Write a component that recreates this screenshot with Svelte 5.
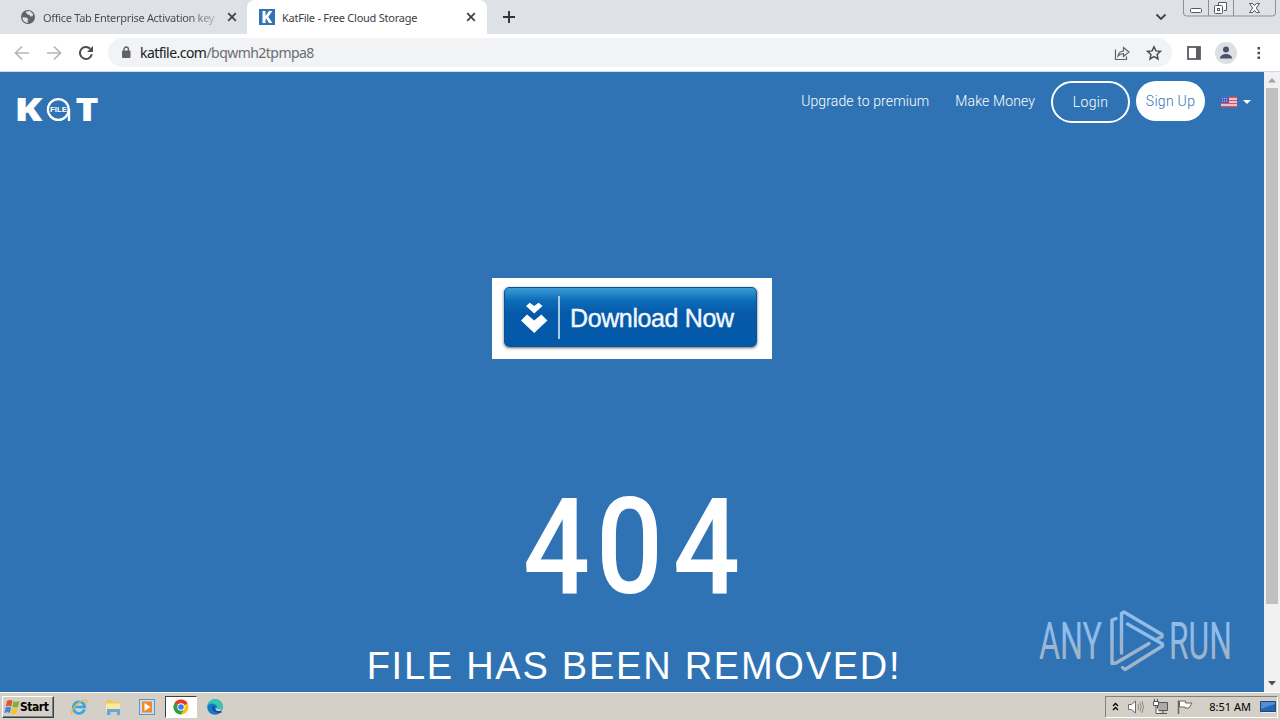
<script>
    let tabs = [
        { title: "Office Tab Enterprise Activation key", active: false },
        { title: "KatFile - Free Cloud Storage", active: true },
    ];
    let host = "katfile.com";
    let path = "/bqwmh2tpmpa8";
    let clock = "8:51 AM";
</script>

<div class="screen">
    <div class="tab-strip">
        {#each tabs as tab}
            <div class="tab" class:active={tab.active}>
                {#if tab.active}
                    <svg class="favicon" width="16" height="16" viewBox="0 0 16 16">
                        <rect width="16" height="16" fill="#3173b5" />
                        <path d="M3.500 2h3v5l3.500-5h3.300L9.300 7.700l4 6.300H10L7.200 9.600l-.7.900V14h-3z" fill="#fff" />
                    </svg>
                {:else}
                    <svg class="favicon" width="16" height="16" viewBox="0 0 16 16">
                        <circle cx="8" cy="8" r="7" fill="#5f6368" />
                        <path d="M2.3 8.2l4.1.3 2 1.7-.8 1.4.5 2.1C5 13.9 2.5 11.5 2.3 8.2zM6.3 2.4L9.8 2l3.4 3-.6 2.2-2.3.4-.5-1.5-2.2-.4-.3-1.2-1.7-.4z" fill="#dee1e6" />
                    </svg>
                {/if}
                <span class="title">{tab.title}</span>
                <svg class="close" width="10" height="10" viewBox="0 0 10 10">
                    <path d="M1.2 1.2l7.6 7.6M8.8 1.2L1.2 8.8" stroke="#3c4043" stroke-width="1.7" />
                </svg>
            </div>
        {/each}
        <svg class="new-tab" width="14" height="14" viewBox="0 0 14 14">
            <path d="M7 1v12M1 7h12" stroke="#303236" stroke-width="1.9" />
        </svg>
        <svg class="tab-search" width="12" height="8" viewBox="0 0 12 8">
            <path d="M1.5 1.5L6 6l4.500-4.500" fill="none" stroke="#3c4043" stroke-width="1.8" />
        </svg>
        <svg class="window-buttons" width="93" height="18" viewBox="0 0 93 18">
            <path d="M.5 0v13a3 3 0 0 0 3 3h86a3 3 0 0 0 3-3V0M25.500 0v16M50.500 0v16" fill="none" stroke="#8b8f97" />
            <rect x="7.500" y="8.500" width="11" height="4" rx="1" fill="#fff" stroke="#55585e" />
            <path d="M35.500 5V2.500h8v8H41" fill="#fff" stroke="#55585e" />
            <rect x="31.500" y="5.500" width="8" height="8" rx="1" fill="#fff" stroke="#55585e" />
            <rect x="34.500" y="8.500" width="2" height="2" fill="none" stroke="#55585e" />
            <path d="M66.500 3.500h3.200l1.800 2.200 1.800-2.200h3.200L73.300 8l3.200 4.500h-3.200l-1.800-2.200-1.800 2.200h-3.200L69.700 8z" fill="#fff" stroke="#55585e" />
        </svg>
    </div>

    <div class="toolbar">
        <svg class="nav" width="16" height="16" viewBox="0 0 16 16">
            <path d="M15 8H2M8 1.500L1.500 8 8 14.500" fill="none" stroke="#b4b6b9" stroke-width="1.700" />
        </svg>
        <svg class="nav" width="16" height="16" viewBox="0 0 16 16">
            <path d="M1 8h13M8 1.500L14.500 8 8 14.500" fill="none" stroke="#b4b6b9" stroke-width="1.700" />
        </svg>
        <svg class="nav" width="16" height="16" viewBox="0 0 16 16">
            <path d="M13.800 9.200A6 6 0 1 1 12.300 3.800" fill="none" stroke="#4a4d51" stroke-width="2" />
            <path d="M15 1v6H9z" fill="#4a4d51" />
        </svg>
        <div class="address">
            <svg width="10" height="13" viewBox="0 0 10 13">
                <rect x="1" y="4.500" width="8.500" height="7.500" rx="1" fill="#5f6368" />
                <path d="M3 5V3.200a2.200 2.200 0 0 1 4.400 0V5" fill="none" stroke="#5f6368" stroke-width="1.400" />
            </svg>
            <span class="url">{host}<span>{path}</span></span>
            <svg class="share" width="16" height="16" viewBox="0 0 16 16">
                <path d="M1.500 4.500v10h11v-3M4 11c.5-3 2.500-4.800 5.500-5V2.500L15 7l-5.500 4.500V8.700C7 8.700 5.500 9.300 4 11z" fill="none" stroke="#5f6368" stroke-width="1.200" />
            </svg>
            <svg width="16" height="16" viewBox="0 0 16 16">
                <path d="M8 1.700l1.900 4.200 4.600.5-3.400 3.100.9 4.500L8 11.700 4 14l.9-4.500-3.400-3.100 4.600-.5z" fill="none" stroke="#4d5156" stroke-width="1.500" />
            </svg>
        </div>
        <svg class="side-panel" width="14" height="14" viewBox="0 0 14 14">
            <rect x="1" y="1" width="12" height="12" fill="none" stroke="#5a5d61" stroke-width="1.800" />
            <path d="M9 1h4v12H9z" fill="#5a5d61" />
        </svg>
        <svg class="profile" width="22" height="22" viewBox="0 0 22 22">
            <circle cx="11" cy="11" r="11" fill="#dcdfe4" />
            <circle cx="11" cy="7.600" r="3" fill="#49546a" />
            <path d="M5 16.500c0-3 3-4.500 6-4.500s6 1.500 6 4.500z" fill="#49546a" />
        </svg>
        <svg class="menu" width="4" height="14" viewBox="0 0 4 14">
            <path d="M.5 1h2.500v2.500H.5zM.5 5.800h2.500v2.500H.5zM.5 10.600h2.500v2.500H.5z" fill="#4a4d51" />
        </svg>
    </div>

    <div class="viewport">
        <main>
            <header>
                <svg class="logo" width="84" height="40" viewBox="0 0 84 40">
                    <text x="-1.500" y="31" class="logo-letter" textLength="28" lengthAdjust="spacingAndGlyphs">K</text>
                    <circle cx="42.300" cy="19.500" r="10.400" fill="none" stroke="#fff" stroke-width="2.200" />
                    <path d="M53 19v12" stroke="#fff" stroke-width="2.400" />
                    <text x="34" y="22.200" class="logo-file" textLength="17" lengthAdjust="spacingAndGlyphs">FILE</text>
                    <text x="59.500" y="31" class="logo-letter" textLength="23" lengthAdjust="spacingAndGlyphs">T</text>
                </svg>
                <nav>
                    <a class="premium" href="#premium">Upgrade to premium</a>
                    <a class="money" href="#money">Make Money</a>
                    <a class="login" href="#login">Login</a>
                    <a class="signup" href="#signup">Sign Up</a>
                    <svg width="30" height="12" viewBox="0 0 30 12">
                        <path d="M0 2h16v10H0z" fill="#f3e3e6" />
                        <path d="M0 2.500h16M0 5.500h16M0 8.500h16M0 11.500h16" stroke="#e0505a" stroke-width="1.300" />
                        <path d="M0 2h8v6H0z" fill="#3c64c8" />
                        <path d="M1 3.500h6M1 6h6" stroke="#b9cdf5" stroke-dasharray="1 1" />
                        <path d="M22 5h8l-4 4z" fill="#fff" />
                    </svg>
                </nav>
            </header>

            <div class="banner">
                <button class="download">
                    <svg width="28" height="32" viewBox="0 0 28 32">
                        <path d="M5 5L8.800 1.800l4.400 3.300L17.600 1.800 21.500 5 13.200 12.500z" fill="#fff" />
                        <path d="M0 19.500l6-6 7.200 6 7.200-6 6 6L13.200 32z" fill="#fff" />
                    </svg>
                    <span class="divider"></span>
                    <span class="download-text">Download Now</span>
                </button>
            </div>

            <svg class="code" width="230" height="160" viewBox="0 0 230 160">
                <text x="6" y="128" textLength="67" lengthAdjust="spacingAndGlyphs">4</text>
                <text x="79" y="128" textLength="67" lengthAdjust="spacingAndGlyphs">0</text>
                <text x="156" y="128" textLength="67" lengthAdjust="spacingAndGlyphs">4</text>
            </svg>
            <h1>FILE HAS BEEN REMOVED!</h1>
        </main>

        <div class="scrollbar">
            <svg width="16" height="16" viewBox="0 0 16 16"><path d="M4 10.500h8l-4-4.500z" fill="#a3a3a3" /></svg>
            <div class="thumb"></div>
            <svg width="16" height="16" viewBox="0 0 16 16"><path d="M4 5h8l-4 4.500z" fill="#505050" /></svg>
        </div>

        <svg class="watermark" width="200" height="64" viewBox="0 0 200 64">
            <defs>
                <linearGradient id="glass" x1="0" y1="0" x2="0" y2="1">
                    <stop offset="0.45" stop-color="#92bce8" />
                    <stop offset="0.65" stop-color="#9db4cb" />
                </linearGradient>
            </defs>
            <text x="1" y="49" textLength="63" lengthAdjust="spacingAndGlyphs">ANY</text>
            <g fill="none" stroke="url(#glass)" stroke-width="3.400" stroke-linejoin="round" stroke-linecap="round">
                <path d="M78 8.500L74 10v43.500L78 53l33-19.500" />
                <path d="M83.500 43V3.500L86 2l38 22.500v2.500l-4 1.500" />
                <path d="M89.500 14l35 20v2L87 59.500l-2.500-2" />
            </g>
            <text x="131" y="49" textLength="63" lengthAdjust="spacingAndGlyphs">RUN</text>
        </svg>
    </div>

    <div class="taskbar">
        <button class="start">
            <svg width="17" height="16" viewBox="0 0 17 16">
                <path d="M3 2c2-1.500 4-1.200 5.500-.2L7.300 7.500C5.500 6.500 3.500 6.500 1.700 7.500z" fill="#e8502c" />
                <path d="M9.500 2.200c2 .9 4 .8 6-.2L14 8c-2 .8-4 .7-5.700-.2z" fill="#76b53b" />
                <path d="M1.500 8.600c2-1.100 3.800-1 5.600-.1L5.900 14c-2-1-3.800-.8-5.600.2z" fill="#3f8bd8" />
                <path d="M8.100 8.800c1.900.9 3.700.9 5.700.1l-1.300 5.700c-2 .8-3.800.7-5.600-.2z" fill="#f7c22c" />
            </svg>
            <span>Start</span>
        </button>
        <div class="task">
            <svg width="18" height="18" viewBox="0 0 18 18">
                <path d="M14.500 11.500A5.800 5.800 0 1 1 14.800 9H5" fill="none" stroke="#39a5e4" stroke-width="2.600" />
                <path d="M2 16.500C-.5 12 10 2 15.500 1.800c2 0 1.400 2.200.5 3.500" fill="none" stroke="#e7bd3c" stroke-width="1.300" />
            </svg>
        </div>
        <div class="task">
            <svg width="18" height="18" viewBox="0 0 18 18">
                <path d="M2 2h5l1 1.500h7V14H2z" fill="#edc95c" />
                <path d="M2 5.500h14V14H2z" fill="#fbe9a0" />
                <path d="M3 17v-6h13v6h-3v-3H6.500v3z" fill="#65a9d6" />
            </svg>
        </div>
        <div class="task">
            <svg width="18" height="18" viewBox="0 0 18 18">
                <rect x="1.500" y="1.500" width="15" height="15" fill="#c7def3" stroke="#5c96ca" />
                <rect x="4" y="3.500" width="10" height="11" fill="#f08a24" />
                <path d="M6.500 5v8l6-4z" fill="#fff" />
            </svg>
        </div>
        <div class="task pressed">
            <svg width="18" height="18" viewBox="0 0 18 18">
                <circle cx="9" cy="9" r="7.500" fill="#fbc116" />
                <path d="M9 9L2.500 5.200a7.500 7.500 0 0 1 13 0z" fill="#e33b2e" />
                <path d="M9 9L2.500 5.200A7.500 7.500 0 0 0 9 16.500l3-5.500z" fill="#2da04d" />
                <circle cx="9" cy="9" r="3.700" fill="#fff" />
                <circle cx="9" cy="9" r="2.800" fill="#3d7be8" />
            </svg>
        </div>
        <div class="task">
            <svg width="18" height="18" viewBox="0 0 18 18">
                <circle cx="9" cy="9" r="7.800" fill="#1676c8" />
                <path d="M1.500 8C2.500 3 6 1.200 9 1.200c5 0 7.800 3.500 7.800 7 0 2.800-2.300 4-4.500 4-1.300 0-2.300-.7-1.500-1.800C11.800 8 9 5.500 6 5.500S2.500 6.500 1.500 8z" fill="#39c6b0" />
                <path d="M7.500 8c-1.200 4 2 6.500 7.800 5.800" fill="none" stroke="#114d92" stroke-width="2" />
                <path d="M10.500 10.300c-.8 1.700 1.500 2.600 5 1.400" fill="none" stroke="#d4d0c8" stroke-width="1.500" />
            </svg>
        </div>
        <div class="tray">
            <svg width="7" height="11" viewBox="0 0 7 11">
                <path d="M1 4L3.500 1.500 6 4M1 8l2.500-2.500L6 8" fill="none" stroke="#000" stroke-width="1.300" />
            </svg>
            <svg class="volume" width="18" height="16" viewBox="0 0 18 16">
                <path d="M1.500 5.500h3L8.500 2v12L4.500 10.500h-3z" fill="#fff" stroke="#6c6c6c" />
                <path d="M11 5q1.500 3 0 6M13 3.500q2.500 4.500 0 9M15 2q3 6 0 12" fill="none" stroke="#8b8b8b" />
            </svg>
            <svg width="18" height="16" viewBox="0 0 18 16">
                <path d="M5.500 3.500h10v8h-10zM8 14.500h7M11 12v2" fill="#aaa" stroke="#555" />
                <path d="M1.500 2.500h5v4h-5zM2.500 0v2M5.500 0v2M4 7v7.500h4" fill="#fff" stroke="#555" />
            </svg>
            <svg width="18" height="16" viewBox="0 0 18 16">
                <path d="M2.500 15V1.500" stroke="#666" stroke-width="1.500" />
                <path d="M3.500 2h6v2h6.500l-3 5H9V8H3.500z" fill="#fff" stroke="#666" />
            </svg>
            <span class="clock">{clock}</span>
            <svg width="16" height="14" viewBox="0 0 16 14">
                <path d="M.5 1.500h15v10H.5z" fill="#2565b8" stroke="#24456f" />
                <path d="M1 2h14v2L1 9z" fill="#4f8fd8" />
                <path d="M2 12.500h13" stroke="#e9eef5" />
            </svg>
        </div>
    </div>
</div>

<style>
    :global(body) {
        margin: 0;
        overflow: hidden;
    }

    .screen {
        display: flex;
        flex-direction: column;
        width: 1280px;
        height: 720px;
        overflow: hidden;
        font-family: "Noto Sans", "Liberation Sans", sans-serif;
    }

    svg {
        display: block;
        flex: none;
        overflow: visible;
    }

    /* browser tabs */
    .tab-strip {
        display: flex;
        align-items: center;
        height: 34px;
        flex: none;
        background: #dee1e6;
    }

    .tab {
        display: flex;
        align-items: center;
        box-sizing: border-box;
        width: 247px;
        height: 34px;
        padding: 0 10px 0 20px;
        font-size: 11px;
        color: #45484c;
    }

    .tab.active {
        width: 240px;
        padding: 0 11px 0 12px;
        background: #fff;
        border-radius: 8px 8px 0 0;
        color: #3c4043;
    }

    .title {
        flex: 1;
        margin-left: 7px;
        white-space: nowrap;
        letter-spacing: -0.25px;
    }

    .tab:not(.active) .title {
        letter-spacing: -0.3px;
        background: linear-gradient(90deg, #45484c 145px, #b5b8bd 172px);
        background-clip: text;
        color: transparent;
    }

    .new-tab {
        margin-left: 15px;
    }

    .tab-search {
        margin-left: auto;
    }

    .window-buttons {
        align-self: flex-start;
        margin: 0 4px 0 16px;
    }

    .toolbar {
        display: flex;
        align-items: center;
        height: 37px;
        flex: none;
        background: #fff;
        border-bottom: 1px solid #c9def3;
    }

    .nav {
        margin-left: 14px;
    }

    .nav + .nav {
        margin-left: 16px;
    }

    .address {
        display: flex;
        align-items: center;
        box-sizing: border-box;
        width: 1064px;
        height: 29px;
        margin-left: 14px;
        padding: 0 10px 0 13px;
        border-radius: 15px;
        background: #f1f3f4;
    }

    .url {
        margin-left: 9px;
        font-size: 14px;
        color: #202124;
        letter-spacing: -0.54px;
    }

    .url span {
        color: #6a6e73;
    }

    .share {
        margin-left: auto;
        margin-right: 16px;
    }

    .side-panel {
        margin-left: 15px;
    }

    .profile {
        margin-left: 14px;
    }

    .menu {
        margin-left: 20px;
    }

    /* page */
    .viewport {
        display: flex;
        position: relative;
        height: 620px;
        flex: none;
    }

    main {
        display: flex;
        flex-direction: column;
        align-items: center;
        width: 1264px;
        background: #3073b5;
        color: #fff;
    }

    header {
        display: flex;
        justify-content: space-between;
        align-self: stretch;
        height: 206px;
        flex: none;
    }

    .logo {
        margin: 18px 0 0 16px;
    }

    .logo-letter {
        font: bold 32px "Open Sans", sans-serif;
        font-weight: 800;
        fill: #fff;
    }

    .logo-file {
        font: bold 7px "Liberation Sans", sans-serif;
        fill: #fff;
    }

    nav {
        display: flex;
        align-items: center;
        height: 40px;
        margin: 9px 13px 0 0;
        font-family: Roboto, sans-serif;
        font-size: 14px;
        font-weight: 300;
    }

    nav a {
        color: #fff;
        text-decoration: none;
        white-space: nowrap;
        letter-spacing: 0.12px;
    }

    .money {
        margin-left: 26px;
    }

    nav .login {
        box-sizing: border-box;
        width: 79px;
        height: 42px;
        margin: 2px 0 0 16px;
        border: 2px solid #fff;
        border-radius: 21px;
        line-height: 38px;
        text-align: center;
    }

    nav .signup {
        width: 69px;
        height: 40px;
        margin: 0 16px 0 6px;
        border-radius: 20px;
        background: #fff;
        color: #3073b5;
        line-height: 40px;
        text-align: center;
    }

    .login,
    .signup {
        letter-spacing: 0.3px;
    }

    .banner {
        box-sizing: border-box;
        width: 280px;
        height: 81px;
        padding: 9px 0 0 12px;
        flex: none;
        background: #fff;
    }

    .download {
        display: flex;
        align-items: center;
        box-sizing: border-box;
        width: 253px;
        height: 60px;
        padding: 0 0 0 16px;
        border: 1px solid #07529a;
        border-radius: 5px;
        background: linear-gradient(#3b9bd6, #0c6bb8 22%, #0559a8 45%, #0459a9);
        box-shadow: 0 1px 3px rgba(0, 0, 0, 0.6);
        color: #f1f8ff;
        text-align: left;
    }

    .divider {
        width: 2px;
        height: 43px;
        margin: 0 10px 0 9px;
        background: #a9cbe8;
    }

    .download-text {
        padding-top: 2px;
        font: 25px "Liberation Sans", sans-serif;
        letter-spacing: -0.38px;
        white-space: nowrap;
        -webkit-text-stroke: 0.4px #f1f8ff;
    }

    .code {
        margin-top: 106px;
    }

    .code text {
        font: 500 134px Roboto, sans-serif;
        fill: #fff;
    }

    h1 {
        margin: 18px 0 0 4px;
        font: 38px/46px "Liberation Sans", sans-serif;
        letter-spacing: 1.75px;
        white-space: nowrap;
    }

    .scrollbar {
        display: flex;
        flex-direction: column;
        width: 16px;
        background: #f1f1f1;
    }

    .thumb {
        width: 12px;
        height: 516px;
        margin: 0 2px auto;
        background: #c1c1c1;
    }

    .watermark {
        position: absolute;
        left: 1038px;
        top: 538px;
    }

    .watermark text {
        font: 51px Roboto, sans-serif;
        fill: url(#glass);
    }

    /* taskbar */
    .taskbar {
        display: flex;
        align-items: center;
        box-sizing: border-box;
        height: 28px;
        flex: none;
        padding: 1px 2px 0;
        border-top: 1px solid #fff;
        background: #d4d0c8;
    }

    .start {
        display: flex;
        align-items: center;
        box-sizing: border-box;
        width: 52px;
        height: 22px;
        margin-right: 9px;
        padding: 0 1px;
        border: 1px solid;
        border-color: #fff #404040 #404040 #fff;
        box-shadow: inset -1px -1px #808080;
        background: #d4d0c8;
        font: bold 12px "DejaVu Sans Condensed", "DejaVu Sans", sans-serif;
        color: #000;
        letter-spacing: -0.45px;
    }

    .start span {
        margin-left: -1px;
    }

    .task {
        display: flex;
        align-items: center;
        justify-content: center;
        box-sizing: border-box;
        width: 32px;
        height: 22px;
        margin-right: 2px;
    }

    .pressed {
        border: 1px solid;
        border-color: #404040 #fff #fff #404040;
        background: #fff;
    }

    .tray {
        display: flex;
        align-items: center;
        box-sizing: border-box;
        width: 173px;
        height: 22px;
        margin-left: auto;
        padding: 0 1px 0 6px;
        gap: 6px;
        border: 1px solid;
        border-color: #808080 #fff #fff #808080;
    }

    .volume {
        margin: 0 1px 0 2px;
    }

    .clock {
        margin-left: auto;
        margin-right: 3px;
        font-size: 11px;
        line-height: 16px;
        color: #000;
        white-space: nowrap;
    }
</style>
